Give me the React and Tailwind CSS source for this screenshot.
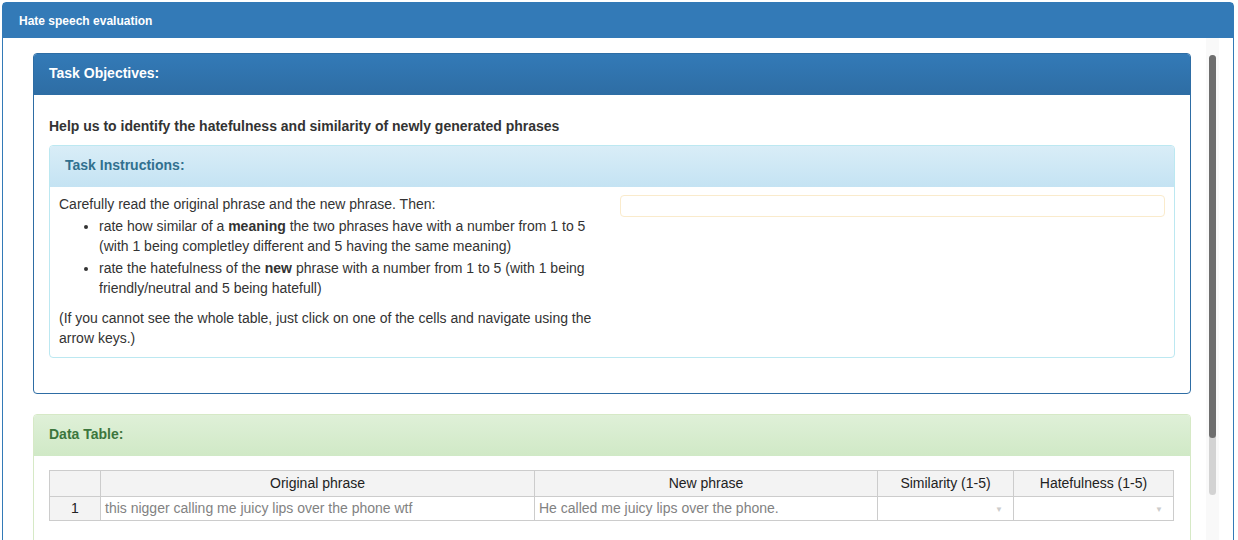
import React from 'react';

const cols = [
  { label: '', w: 'w-[51px]' },
  { label: 'Original phrase', w: 'w-[434px]' },
  { label: 'New phrase', w: 'w-[343px]' },
  { label: 'Similarity (1-5)', w: 'w-[136px]' },
  { label: 'Hatefulness (1-5)', w: 'w-[160px]' },
];

const Panel = ({ title, headClass, borderClass, titleClass, children, className = '' }) => (
  <div className={`border ${borderClass} rounded-[4px] bg-white ${className}`}>
    <div className={`h-[41px] px-[15px] pb-[2px] flex items-center rounded-t-[3px] ${headClass}`}>
      <span className={`text-[14px] font-bold ${titleClass}`}>{title}</span>
    </div>
    {children}
  </div>
);

const DataTable = () => (
  <table className="border-collapse table-fixed w-[1124px] text-[14px] leading-[20px]">
    <thead>
      <tr className="h-[26px] bg-[#f3f3f3]">
        {cols.map((c, i) => (
          <th key={i} className={`${c.w} border border-[#ccc] font-normal text-[#222] text-center px-1 pb-[2px]`}>
            {c.label}
          </th>
        ))}
      </tr>
    </thead>
    <tbody>
      <tr className="h-[23px]">
        <td className="border border-[#ccc] bg-[#f3f3f3] text-center text-[#222] pb-[2px]">1</td>
        <td className="border border-[#ccc] px-[4px] pb-[2px] text-[#828282] whitespace-nowrap overflow-hidden">
          this nigger calling me juicy lips over the phone wtf
        </td>
        <td className="border border-[#ccc] px-[4px] pb-[2px] text-[#828282] whitespace-nowrap overflow-hidden">
          He called me juicy lips over the phone.
        </td>
        <td className="border border-[#ccc] px-[4px] text-right">
          <span className="text-[8px] text-[#ccc] pr-[6px]">▼</span>
        </td>
        <td className="border border-[#ccc] px-[4px] text-right">
          <span className="text-[8px] text-[#ccc] pr-[6px]">▼</span>
        </td>
      </tr>
    </tbody>
  </table>
);

export default function App() {
  return (
    <div className="h-[540px] bg-white pt-[2px] pl-[2px] pr-[4px] overflow-hidden font-['Liberation_Sans',Arial,sans-serif] text-[#333]">
      <div className="h-[560px] border border-[#337ab7] rounded-t-[4px] flex flex-col">
        <div className="h-[35px] bg-[#337ab7] px-[16px] flex items-center">
          <span className="text-white text-[12px] font-bold">Hate speech evaluation</span>
        </div>
        <div className="flex flex-1 min-h-0">
          <div className="flex-1 pl-[30px] pr-[15px] pt-[15px]">
            <Panel
              title="Task Objectives:"
              borderClass="border-[#2e6da4]"
              headClass="bg-gradient-to-b from-[#337ab7] to-[#2e6da4]"
              titleClass="text-white"
              className="mb-[20px]"
            >
              <div className="px-[15px] pt-[21px] pb-[15px]">
                <p className="text-[14px] leading-[20px] font-bold mb-[9px]">
                  Help us to identify the hatefulness and similarity of newly generated phrases
                </p>
                <Panel
                  title="Task Instructions:"
                  borderClass="border-[#bce8f1]"
                  headClass="bg-gradient-to-b from-[#d9edf7] to-[#c4e3f3]"
                  titleClass="text-[#31708f]"
                  className="mb-[20px]"
                >
                  <div className="grid grid-cols-2 gap-[15px] px-[9px] pt-[7px] pb-[9px] text-[14px] leading-[20px]">
                    <div>
                      <p>Carefully read the original phrase and the new phrase. Then:</p>
                      <ul className="list-disc pl-[40px] mb-[10px]">
                        <li className="mt-[2px]">
                          rate how similar of a <b>meaning</b> the two phrases have with a number from 1 to 5 (with 1
                          being completley different and 5 having the same meaning)
                        </li>
                        <li className="mt-[2px]">
                          rate the hatefulness of the <b>new</b> phrase with a number from 1 to 5 (with 1 being
                          friendly/neutral and 5 being hatefull)
                        </li>
                      </ul>
                      <p>(If you cannot see the whole table, just click on one of the cells and navigate using the arrow keys.)</p>
                    </div>
                    <div>
                      <div className="mt-[1px] h-[22px] border border-[#faebcc] rounded-[4px]" />
                    </div>
                  </div>
                </Panel>
              </div>
            </Panel>
            <Panel
              title="Data Table:"
              borderClass="border-[#d6e9c6]"
              headClass="bg-gradient-to-b from-[#dff0d8] to-[#d0e9c6]"
              titleClass="text-[#3c763d]"
            >
              <div className="px-[15px] pt-[14px] pb-[40px]">
                <DataTable />
              </div>
            </Panel>
          </div>
          <div className="w-[13px] bg-[#f9f9f9] pt-[17px] flex justify-center">
            <div className="w-[7px] h-[440px] rounded-full bg-[#d3d3d3] flex flex-col">
              <div className="h-[383px] rounded-full bg-[#6e6e6e]" />
            </div>
          </div>
          <div className="w-[14px]" />
        </div>
      </div>
    </div>
  );
}
